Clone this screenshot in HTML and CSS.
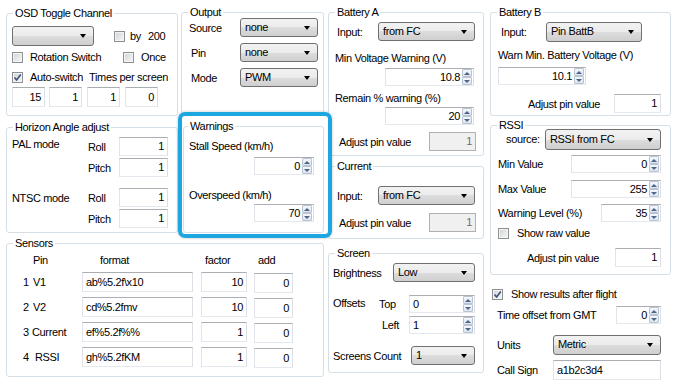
FILE: index.html
```html
<!DOCTYPE html>
<html lang="en">
<head>
    <meta charset="UTF-8">
    <title>OSD Config</title>
    <link rel="stylesheet" href="styles.css">
</head>
<body>
<div class="app">
    <div class="left">
        <div class="left-top">
            <div class="col1">
                <fieldset class="group osd">
                    <legend>OSD Toggle Channel</legend>
                    <div class="body osd-body">
                        <div class="row osd-r1">
                            <div class="combo w82"></div>
                            <span class="chk by-chk"></span><span class="by">by</span><span>200</span>
                        </div>
                        <div class="row osd-r2">
                            <span class="chk"></span><span class="chk-label rot-label">Rotation Switch</span>
                            <span class="chk"></span><span class="chk-label">Once</span>
                        </div>
                        <div class="row osd-r3">
                            <span class="chk on"><svg viewBox="0 0 9 9"><path d="M1.5 4.5 L3.6 7 L7.8 1.4"/></svg></span><span class="chk-label">Auto-switch</span><span class="times">Times per screen</span>
                        </div>
                        <div class="row osd-r4">
                            <div class="txt num w33">15</div>
                            <div class="txt num w33 ml4">1</div>
                            <div class="txt num w33 ml5">1</div>
                            <div class="txt num w33 ml5">0</div>
                        </div>
                    </div>
                </fieldset>

                <fieldset class="group horizon">
                    <legend>Horizon Angle adjust</legend>
                    <div class="body horizon-body">
                        <div class="mode">
                            <span class="mode-label">PAL mode</span>
                            <span>Roll</span><div class="txt num">1</div>
                            <span>Pitch</span><div class="txt num">1</div>
                        </div>
                        <div class="mode ntsc">
                            <span class="mode-label">NTSC mode</span>
                            <span>Roll</span><div class="txt num">1</div>
                            <span>Pitch</span><div class="txt num">1</div>
                        </div>
                    </div>
                </fieldset>
            </div>

            <div class="col2">
                <fieldset class="group output">
                    <legend>Output</legend>
                    <div class="body output-body">
                        <span class="lbl-src">Source</span><div class="combo">none</div>
                        <span class="lbl-pin">Pin</span><div class="combo">none</div>
                        <span class="lbl-pin">Mode</span><div class="combo">PWM</div>
                    </div>
                </fieldset>

                <fieldset class="group warn">
                    <legend>Warnings</legend>
                    <div class="body warn-body">
                        <div class="warn-l1">Stall Speed (km/h)</div>
                        <div class="spin w60 warn-s1"><span class="val">0</span><span class="arrows"><i class="up"></i><i class="dn"></i></span></div>
                        <div class="warn-l2">Overspeed (km/h)</div>
                        <div class="spin w60 warn-s2"><span class="val">70</span><span class="arrows"><i class="up"></i><i class="dn"></i></span></div>
                    </div>
                </fieldset>
            </div>
        </div>

        <fieldset class="group sensors">
            <legend>Sensors</legend>
            <div class="body sensors-grid">
                <span></span><span>Pin</span><span class="h-format">format</span><span class="h-factor">factor</span><span class="h-add">add</span>

                <span class="pin-no">1</span><span>V1</span>
                <div class="txt w111">ab%5.2f\x10</div><div class="txt num w46">10</div><div class="txt num w39 add">0</div>

                <span class="pin-no">2</span><span>V2</span>
                <div class="txt w111">cd%5.2fmv</div><div class="txt num w46">10</div><div class="txt num w39 add">0</div>

                <span class="pin-no">3</span><span class="cur">Current</span>
                <div class="txt w111">ef%5.2f%%</div><div class="txt num w46">1</div><div class="txt num w39 add">0</div>

                <span class="pin-no">4</span><span class="rssi-name">RSSI</span>
                <div class="txt w111">gh%5.2fKM</div><div class="txt num w46">1</div><div class="txt num w39 add">0</div>
            </div>
        </fieldset>
    </div>

    <div class="col3">
        <fieldset class="group batt-a">
            <legend>Battery A</legend>
            <div class="body col3-body">
                <div class="row h19 bat-r1">
                    <span class="pl2">Input:</span>
                    <div class="combo w97 push">from FC</div>
                </div>
                <div class="bat-l2">Min Voltage Warning (V)</div>
                <div class="spin w89 bat-s1"><span class="val">10.8</span><span class="arrows"><i class="up"></i><i class="dn"></i></span></div>
                <div class="bat-l3">Remain % warning (%)</div>
                <div class="spin w89 bat-s2"><span class="val">20</span><span class="arrows"><i class="up"></i><i class="dn"></i></span></div>
                <div class="row h19 bat-r4">
                    <span class="pl4">Adjust pin value</span>
                    <div class="txt num off w47 push">1</div>
                </div>
            </div>
        </fieldset>

        <fieldset class="group current">
            <legend>Current</legend>
            <div class="body col3-body">
                <div class="row h19 cur-r1">
                    <span class="pl2">Input:</span>
                    <div class="combo w97 push">from FC</div>
                </div>
                <div class="row h19 cur-r2">
                    <span class="pl4">Adjust pin value</span>
                    <div class="txt num off w47 push">1</div>
                </div>
            </div>
        </fieldset>

        <fieldset class="group screen">
            <legend>Screen</legend>
            <div class="body screen-body">
                <div class="row h19 scr-r1">
                    <span>Brightness</span>
                    <div class="combo w82 push">Low</div>
                </div>
                <div class="offsets">
                    <span class="off-label">Offsets</span>
                    <span>Top</span>
                    <div class="spin spin-l"><span class="val">0</span><span class="arrows"><i class="up"></i><i class="dn"></i></span></div>
                    <span class="pl3">Left</span>
                    <div class="spin spin-l"><span class="val">1</span><span class="arrows"><i class="up"></i><i class="dn"></i></span></div>
                </div>
                <div class="row h19 scr-r3">
                    <span>Screens Count</span>
                    <div class="combo w64 push">1</div>
                </div>
            </div>
        </fieldset>
    </div>

    <div class="col4">
        <fieldset class="group batt-b">
            <legend>Battery B</legend>
            <div class="body col4-body">
                <div class="row bb-r1">
                    <span class="bb-input">Input:</span>
                    <div class="combo w96">Pin BattB</div>
                </div>
                <div class="bb-l2">Warn Min. Battery Voltage (V)</div>
                <div class="spin w88 bb-s1"><span class="val">10.1</span><span class="arrows"><i class="up"></i><i class="dn"></i></span></div>
                <div class="row h19 bb-r3">
                    <span class="pl30">Adjust pin value</span>
                    <div class="txt num w47 push">1</div>
                </div>
            </div>
        </fieldset>

        <fieldset class="group rssi">
            <legend>RSSI</legend>
            <div class="body col4-body">
                <div class="row rs-r1">
                    <span class="pl8">source:</span>
                    <div class="combo w116 push rs-combo">RSSI from FC</div>
                </div>
                <div class="row rs-r2">
                    <span>Min Value</span>
                    <div class="spin w90 push"><span class="val">0</span><span class="arrows"><i class="up"></i><i class="dn"></i></span></div>
                </div>
                <div class="row rs-r3">
                    <span>Max Value</span>
                    <div class="spin w90 push"><span class="val">255</span><span class="arrows"><i class="up"></i><i class="dn"></i></span></div>
                </div>
                <div class="row rs-r4">
                    <span>Warning Level (%)</span>
                    <div class="spin w60 push"><span class="val">35</span><span class="arrows"><i class="up"></i><i class="dn"></i></span></div>
                </div>
                <div class="row rs-r5">
                    <span class="chk"></span><span class="chk-label">Show raw value</span>
                </div>
                <div class="row h19 rs-r6">
                    <span class="pl29">Adjust pin value</span>
                    <div class="txt num w46 push">1</div>
                </div>
            </div>
        </fieldset>

        <div class="row after-chk">
            <span class="chk on"><svg viewBox="0 0 9 9"><path d="M1.5 4.5 L3.6 7 L7.8 1.4"/></svg></span><span class="chk-label">Show results after flight</span>
        </div>
        <div class="misc">
            <div class="row misc-r1">
                <span>Time offset from GMT</span>
                <div class="spin w45 push"><span class="val">0</span><span class="arrows"><i class="up"></i><i class="dn"></i></span></div>
            </div>
            <div class="row misc-r2">
                <span>Units</span>
                <div class="combo w108 push">Metric</div>
            </div>
            <div class="row misc-r3">
                <span>Call Sign</span>
                <div class="txt w108 push">a1b2c3d4</div>
            </div>
        </div>
    </div>
</div>
</body>
</html>
```

FILE: styles.css
```css
/* WinForms style settings panel */
* {
    box-sizing: border-box;
}

body {
    margin: 0;
    background-color: #fff;
    font-family: "Liberation Sans", Arial, sans-serif;
    font-size: 11px;
    line-height: 14px;
    letter-spacing: -0.35px;
    color: #000;
}

.app {
    display: flex;
    width: 679px;
    height: 381px;
    padding-left: 6px;
    overflow: hidden;
}

.left {
    width: 318px;
    display: flex;
    flex-direction: column;
}

.left-top {
    display: flex;
}

.col1 {
    width: 172px;
    padding-top: 7px;
}

.col2 {
    width: 143px;
    margin-left: 3px;
    padding-top: 6px;
}

.col3 {
    width: 156px;
    margin-left: 4px;
    padding-top: 6px;
}

.col4 {
    width: 181px;
    margin-left: 6px;
    padding-top: 6px;
}

/* group boxes */
.group {
    margin: 0;
    padding: 0;
    min-width: 0;
    border: 1px solid #d5dfe5;
    border-radius: 3px;
}

.group legend {
    margin-left: 6px;
    padding: 0 2px;
    line-height: 13px;
}

.row {
    display: flex;
    align-items: center;
}

.push {
    margin-left: auto;
}

.h19 { height: 19px; }
.pl2 { padding-left: 2px; }
.pl3 { padding-left: 3px; }
.pl4 { padding-left: 4px; }
.pl8 { padding-left: 8px; }
.pl29 { padding-left: 29px; }
.pl30 { padding-left: 30px; }
.ml4 { margin-left: 4px; }
.ml5 { margin-left: 5px; }

.w33 { width: 33px; }
.w39 { width: 39px; }
.w45 { width: 45px; }
.w46 { width: 46px; }
.w47 { width: 47px; }
.w60 { width: 60px; }
.w64 { width: 64px; }
.w82 { width: 82px; }
.w88 { width: 88px; }
.w89 { width: 89px; }
.w90 { width: 90px; }
.w96 { width: 96px; }
.w97 { width: 97px; }
.w108 { width: 108px; }
.w111 { width: 111px; }
.w116 { width: 116px; }

/* controls */
.txt {
    height: 20px;
    padding: 0 3px;
    border: 1px solid;
    border-color: #abadb3 #dbdfe6 #e3e9ef #e2e3ea;
    background-color: #fff;
    line-height: 18px;
    white-space: nowrap;
}

.num {
    text-align: right;
}

.txt.off {
    background-color: #f0f0f0;
    border-color: #adb2b5;
    color: #6d6d6d;
    height: 19px;
    line-height: 17px;
}

.combo {
    position: relative;
    flex: none;
    height: 19px;
    padding-left: 4px;
    border: 1px solid #707070;
    border-radius: 3px;
    background: linear-gradient(#f2f2f2, #ebebeb 50%, #dddddd 50%, #cfcfcf);
    line-height: 17px;
    white-space: nowrap;
}

.combo::after {
    content: "";
    position: absolute;
    right: 7px;
    top: 7px;
    border-left: 3.5px solid transparent;
    border-right: 3.5px solid transparent;
    border-top: 4px solid #000;
}

.spin {
    display: flex;
    flex: none;
    height: 18px;
    border: 1px solid;
    border-color: #abadb3 #dbdfe6 #e3e9ef #e2e3ea;
    background-color: #fff;
}

.spin .val {
    flex: 1;
    padding-right: 2px;
    text-align: right;
    line-height: 16px;
}

.spin.spin-l .val {
    text-align: left;
    padding-left: 3px;
}

.spin .arrows {
    width: 11px;
    display: flex;
    flex-direction: column;
    padding: 0 1px 0 0;
}

.spin i {
    flex: 1;
    position: relative;
    border: 1px solid #b9c3d1;
    border-radius: 1px;
    background: linear-gradient(#f5f8fc, #dbe4ef);
}

.spin i::after {
    content: "";
    position: absolute;
    left: 50%;
    top: 50%;
    margin: -1.5px 0 0 -3px;
    border-left: 3px solid transparent;
    border-right: 3px solid transparent;
}

.spin i.up::after {
    border-bottom: 3px solid #4f6585;
}

.spin i.dn::after {
    border-top: 3px solid #4f6585;
}

.chk {
    position: relative;
    flex: none;
    width: 11px;
    height: 11px;
    border: 1px solid #8e8f8f;
    background: linear-gradient(135deg, #cfd3d8, #f7f7f7);
    box-shadow: inset 0 0 0 1px #f4f4f4;
}

.chk svg {
    position: absolute;
    left: 0;
    top: 0;
    width: 9px;
    height: 9px;
}

.chk svg path {
    fill: none;
    stroke: #3e4f7c;
    stroke-width: 1.6;
}

.chk-label {
    margin-left: 7px;
}

/* OSD toggle */
.osd {
    height: 109px;
}

.osd-body {
    padding-left: 5px;
}

.osd-r1 {
    height: 20px;
    margin-top: 6px;
}

.osd-r1 .combo {
    height: 20px;
}

.by-chk {
    margin-left: 20px;
}

.by {
    margin: 0 7px 0 5px;
}

.osd-r2 {
    height: 14px;
    margin-top: 4px;
}

.rot-label {
    width: 93px;
}

.osd-r3 {
    height: 14px;
    margin-top: 6px;
}

.times {
    margin-left: 6px;
}

.osd-r4 {
    margin-top: 3px;
}

/* horizon */
.horizon {
    height: 112px;
    margin-top: 5px;
}

.horizon-body {
    padding: 3px 0 0 5px;
}

.mode {
    display: grid;
    grid-template-columns: 76px 31px 49px;
    grid-template-rows: 19px 19px;
    row-gap: 2px;
    align-items: center;
}

.mode .txt {
    height: 19px;
    line-height: 17px;
}

.mode-label {
    grid-row: 1 / 3;
    align-self: start;
}

.ntsc {
    margin-top: 11px;
}

.ntsc .mode-label {
    margin-top: 3px;
}

/* sensors */
.sensors {
    height: 140px;
    margin-top: 4px;
}

.sensors-grid {
    display: grid;
    grid-template-columns: 12px 49px 119px 53px 39px;
    grid-template-rows: 14px repeat(4, 20px);
    row-gap: 5px;
    align-items: center;
    padding: 3px 0 0 14px;
}

.sensors-grid .add {
    margin-top: 2px;
}

.pin-no {
    padding-left: 2px;
}

.cur {
    margin-left: -1px;
}

.rssi-name {
    padding-left: 2px;
}

.h-format {
    padding-left: 18px;
}

.h-factor,
.h-add {
    padding-left: 4px;
}

/* output */
.output {
    height: 108px;
}

.output-body {
    display: grid;
    grid-template-columns: 52px 78px;
    grid-template-rows: repeat(3, 19px);
    row-gap: 6px;
    align-items: center;
    margin-top: -1px;
    padding-left: 6px;
}

.lbl-src {
    padding-left: 1px;
}

.lbl-pin {
    padding-left: 3px;
}

/* warnings, with the blue highlight frame drawn over it */
.warn {
    position: relative;
    width: 141px;
    height: 113px;
    margin: 6px 0 0 2px;
}

.warn legend {
    margin-left: 4px;
}

.warn::after {
    content: "";
    position: absolute;
    left: -6px;
    right: -9px;
    top: -21px;
    bottom: -6px;
    border: 4px solid #1ca7e0;
    border-radius: 7px;
    box-shadow: 0 0 3px rgba(0, 0, 0, 0.25);
}

.warn-body {
    padding: 0 9px 0 5px;
}

.warn-l1 {
    margin-top: 6px;
}

.warn-s1 {
    margin: 4px 0 0 auto;
}

.warn-l2 {
    margin-top: 13px;
}

.warn-s2 {
    margin: 2px 0 0 auto;
}

/* column 3 */
.col3-body {
    padding: 0 8px 0 6px;
}

.batt-a {
    height: 150px;
}

.bat-r1 {
    margin-top: 3px;
}

.bat-l2 {
    margin-top: 10px;
}

.bat-s1 {
    margin: 3px 1px 0 auto;
}

.bat-l3 {
    margin-top: 5px;
}

.bat-s2 {
    margin: 2px 1px 0 auto;
}

.bat-r4 {
    margin-top: 7px;
}

.bat-r4 .txt,
.cur-r2 .txt {
    margin-right: -1px;
}

.current {
    height: 79px;
    margin-top: 4px;
}

.cur-r1 {
    margin-top: 13px;
}

.cur-r2 {
    margin-top: 8px;
}

.screen {
    height: 126px;
    margin-top: 8px;
}

.screen-body {
    padding: 0 8px 0 4px;
}

.scr-r1 {
    margin-top: 3px;
}

.offsets {
    display: grid;
    grid-template-columns: 46px 30px 66px;
    grid-template-rows: 18px 18px;
    row-gap: 3px;
    align-items: center;
    margin-top: 13px;
}

.off-label {
    grid-row: 1 / 3;
    align-self: start;
    margin-top: 1px;
}

.scr-r3 {
    margin-top: 12px;
}

/* column 4 */
.col4-body {
    padding: 0 9px 0 7px;
}

.batt-b {
    height: 110px;
}

.bb-r1 {
    height: 20px;
    margin-top: 3px;
}

.bb-r1 .combo {
    height: 20px;
}

.bb-input {
    width: 48px;
    padding-left: 3px;
}

.bb-l2 {
    margin-top: 6px;
}

.bb-s1 {
    margin-top: 5px;
}

.bb-r3 {
    margin-top: 9px;
}

.bb-r3 .txt,
.rs-r6 .txt {
    height: 19px;
    line-height: 17px;
}

.rssi {
    height: 156px;
    margin-top: 3px;
}

.rs-r1 {
    height: 20px;
    margin-top: -3px;
}

.rs-combo {
    height: 21px;
    line-height: 19px;
}

.rs-combo::after {
    top: 8px;
}

.rs-r2 {
    margin-top: 6px;
}

.rs-r3 {
    margin-top: 7px;
}

.rs-r4 {
    margin-top: 6px;
}

.rs-r5 {
    height: 14px;
    margin-top: 4px;
}

.rs-r5 .chk-label {
    margin-left: 8px;
}

.rs-r6 {
    margin-top: 8px;
}

.after-chk {
    height: 14px;
    margin-top: 12px;
    padding-left: 2px;
}

.after-chk .chk-label {
    margin-left: 8px;
}

.misc {
    padding: 0 10px 0 7px;
}

.misc-r1 {
    margin-top: 5px;
}

.misc-r2 {
    height: 20px;
    margin-top: 11px;
}

.misc-r2 .combo {
    height: 20px;
}

.misc-r3 {
    margin-top: 5px;
}
```
